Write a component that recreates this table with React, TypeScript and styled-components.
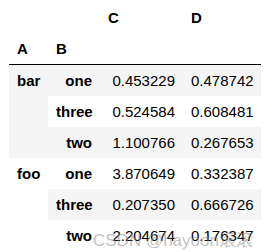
import React, { FC } from 'react'
import styled, { createGlobalStyle } from 'styled-components'

const GlobalStyle = createGlobalStyle`
  body {
    margin: 0;
    background: #fff;
    font-family: "Liberation Sans", Arial, sans-serif;
  }
`

type Row = { b: string; c: string; d: string }
type Group = { a: string; rows: Row[] }

const groups: Group[] = [
  {
    a: 'bar',
    rows: [
      { b: 'one', c: '0.453229', d: '0.478742' },
      { b: 'three', c: '0.524584', d: '0.608481' },
      { b: 'two', c: '1.100766', d: '0.267653' },
    ],
  },
  {
    a: 'foo',
    rows: [
      { b: 'one', c: '3.870649', d: '0.332387' },
      { b: 'three', c: '0.207350', d: '0.666726' },
      { b: 'two', c: '2.204674', d: '0.176347' },
    ],
  },
]

const App: FC = () => {
  let n = 0
  return (
    <Wrapper>
      <GlobalStyle />
      <Table>
        <colgroup>
          <col style={{ width: 39 }} />
          <col style={{ width: 52 }} />
          <col style={{ width: 83 }} />
          <col style={{ width: 78 }} />
        </colgroup>
        <thead>
          <HeadRow>
            <Th />
            <Th />
            <Th>C</Th>
            <Th>D</Th>
          </HeadRow>
          <HeadRow $ruled>
            <Th>A</Th>
            <Th>B</Th>
            <Th />
            <Th />
          </HeadRow>
        </thead>
        <tbody>
          {groups.map((g) =>
            g.rows.map((r, i) => {
              n += 1
              return (
                <BodyRow key={g.a + r.b} $shaded={n % 2 === 1}>
                  {i === 0 && <IndexA rowSpan={g.rows.length}>{g.a}</IndexA>}
                  <IndexB>{r.b}</IndexB>
                  <Td>{r.c}</Td>
                  <Td>{r.d}</Td>
                </BodyRow>
              )
            })
          )}
        </tbody>
      </Table>
      <Watermark>CSDN @hayoon滚滚</Watermark>
    </Wrapper>
  )
}

export default App

const Wrapper = styled.div`
  position: relative;
  width: 266px;
  height: 252px;
  padding: 2px 0 0 9px;
  box-sizing: border-box;
  overflow: hidden;
`

const Table = styled.table`
  border-collapse: separate;
  border-spacing: 0;
  table-layout: fixed;
  width: 252px;
  font-size: 15px;
  color: #000;
`

const HeadRow = styled.tr<{ $ruled?: boolean }>`
  height: ${(p) => (p.$ruled ? 32 : 31)}px;
  th {
    border-bottom: ${(p) => (p.$ruled ? '1px solid #000' : 'none')};
  }
`

const Th = styled.th`
  padding: 0 8px;
  text-align: left;
  font-weight: bold;
  vertical-align: middle;
`

const BodyRow = styled.tr<{ $shaded: boolean }>`
  height: 31px;
  background: ${(p) => (p.$shaded ? '#f5f5f5' : '#fff')};
`

const IndexA = styled.th`
  padding: 0 8px;
  text-align: left;
  vertical-align: top;
  line-height: 31px;
  font-weight: bold;
`

const IndexB = styled.th`
  padding: 0 8px;
  text-align: right;
  font-weight: bold;
`

const Td = styled.td`
  padding: 0 8px;
  text-align: right;
`

const Watermark = styled.div`
  position: absolute;
  left: 93px;
  top: 226px;
  font-family: "Liberation Sans", "Noto Sans CJK SC", sans-serif;
  font-size: 17px;
  color: rgba(140, 140, 140, 0.55);
  white-space: nowrap;
  pointer-events: none;
`
